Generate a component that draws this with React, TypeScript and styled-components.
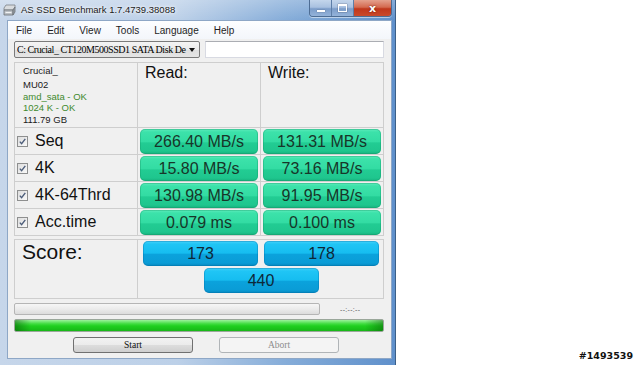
import React from "react"
import styled, { createGlobalStyle } from "styled-components"

const GlobalStyle = createGlobalStyle`
	html, body {
		margin: 0;
		padding: 0;
		background: #ffffff;
		font-family: "Liberation Sans", Arial, sans-serif;
	}
`

const menuItems = ["File", "Edit", "View", "Tools", "Language", "Help"]

const driveInfo = [
	{ text: "Crucial_", ok: false },
	{ text: "MU02", ok: false },
	{ text: "amd_sata - OK", ok: true },
	{ text: "1024 K - OK", ok: true },
	{ text: "111.79 GB", ok: false },
]

const results = [
	{ label: "Seq", read: "266.40 MB/s", write: "131.31 MB/s" },
	{ label: "4K", read: "15.80 MB/s", write: "73.16 MB/s" },
	{ label: "4K-64Thrd", read: "130.98 MB/s", write: "91.95 MB/s" },
	{ label: "Acc.time", read: "0.079 ms", write: "0.100 ms" },
]

const DriveIcon = () => (
	<svg width="13" height="12" viewBox="0 0 13 12">
		<path d="M3 1 L12 1 L12 3 L10 6 L1 6 L1 4 Z" fill="#d9dcdf" stroke="#7b8085" strokeWidth="0.8" />
		<path d="M1 6 L10 6 L10 11 L1 11 Z" fill="#b9bec3" stroke="#6d7277" strokeWidth="0.8" />
		<path d="M10 6 L12 3 L12 8 L10 11 Z" fill="#9aa0a6" stroke="#6d7277" strokeWidth="0.8" />
		<path d="M2.5 8.5 H8.5" stroke="#f2f3f4" strokeWidth="1" />
	</svg>
)

const CheckIcon = () => (
	<svg width="11" height="11" viewBox="0 0 11 11">
		<defs>
			<linearGradient id="cbfill" x1="0" y1="0" x2="1" y2="1">
				<stop offset="0" stopColor="#dcdcdc" />
				<stop offset="1" stopColor="#fbfbfb" />
			</linearGradient>
		</defs>
		<rect x="0.5" y="0.5" width="10" height="10" fill="url(#cbfill)" stroke="#8e8f8f" />
		<path d="M2.8 5.6 L4.6 7.6 L8.3 2.9" fill="none" stroke="#4c5d7a" strokeWidth="1.4" />
	</svg>
)

const App: React.FC = () => {
	return (
		<Page>
			<GlobalStyle />
			<Window>
				<TitleBar>
					<DriveIcon />
					<Title>AS SSD Benchmark 1.7.4739.38088</Title>
					<Caption>
						<CaptionButton>
							<MinGlyph />
						</CaptionButton>
						<CaptionButton>
							<MaxGlyph />
						</CaptionButton>
						<CloseButton>x</CloseButton>
					</Caption>
				</TitleBar>
				<Client>
					<MenuBar>
						{menuItems.map((m) => (
							<MenuItem key={m}>{m}</MenuItem>
						))}
					</MenuBar>
					<Content>
						<DriveRow>
							<Combo>
								<ComboText>C: Crucial_ CT120M500SSD1 SATA Disk De</ComboText>
								<Arrow />
							</Combo>
							<TextBox />
						</DriveRow>
						<Table>
							<InfoCell>
								{driveInfo.map((d, i) => (
									<InfoLine key={d.text} $ok={d.ok} $first={i === 0}>
										{d.text}
									</InfoLine>
								))}
							</InfoCell>
							<HeadCell>Read:</HeadCell>
							<HeadCell>Write:</HeadCell>
							{results.map((r) => (
								<React.Fragment key={r.label}>
									<LabelCell>
										<CheckIcon />
										<span>{r.label}</span>
									</LabelCell>
									<ValueCell>
										<ResultButton>{r.read}</ResultButton>
									</ValueCell>
									<ValueCell>
										<ResultButton>{r.write}</ResultButton>
									</ValueCell>
								</React.Fragment>
							))}
						</Table>
						<ScoreBox>
							<ScoreLabel>Score:</ScoreLabel>
							<ScoreGrid>
								<ScoreButton>173</ScoreButton>
								<ScoreButton>178</ScoreButton>
								<ScoreButton $total>440</ScoreButton>
							</ScoreGrid>
						</ScoreBox>
						<ProgressRow>
							<GrayBar />
							<Timer>--:--:--</Timer>
						</ProgressRow>
						<GreenBar />
						<ButtonRow>
							<PushButton>Start</PushButton>
							<PushButton $disabled>Abort</PushButton>
						</ButtonRow>
					</Content>
				</Client>
			</Window>
			<Aside>
				<Watermark>#1493539</Watermark>
			</Aside>
		</Page>
	)
}

export default App

const Page = styled.div`
	display: flex;
	width: 640px;
	height: 365px;
	overflow: hidden;
`

const Window = styled.div`
	display: flex;
	flex-direction: column;
	width: 395px;
	height: 365px;
	flex-shrink: 0;
	border-right: 1px solid #3b5f88;
	background: linear-gradient(180deg, rgba(255, 255, 255, 0.25) 0, rgba(255, 255, 255, 0) 20px),
		linear-gradient(90deg, #c6d6ea 0%, #bcd0e8 45%, #86add9 72%, #5f90cb 100%);
`

const TitleBar = styled.div`
	display: flex;
	align-items: flex-start;
	height: 20px;
	padding-left: 3px;
	svg {
		margin-top: 4px;
	}
`

const Title = styled.div`
	margin-left: 5px;
	margin-top: 4px;
	font-size: 9.5px;
	line-height: 12px;
	color: #1b1b1b;
	text-shadow: 0 0 5px #ffffff, 0 0 3px #ffffff;
	white-space: nowrap;
`

const Caption = styled.div`
	display: flex;
	margin-left: auto;
	margin-right: 3px;
	height: 16px;
	border: 1px solid #4d6d94;
	border-top: none;
	border-radius: 0 0 4px 4px;
	overflow: hidden;
	box-shadow: 0 1px 0 rgba(255, 255, 255, 0.5);
`

const CaptionButton = styled.div`
	display: flex;
	align-items: center;
	justify-content: center;
	width: 21px;
	background: linear-gradient(180deg, #c4d6ec 0%, #a9c1e0 45%, #7c9dc9 55%, #94b3da 100%);
	border-right: 1px solid #5d7ea8;
`

const MinGlyph = styled.div`
	width: 8px;
	height: 2px;
	margin-top: 6px;
	background: #ffffff;
	box-shadow: 0 0 1px #334;
`

const MaxGlyph = styled.div`
	width: 7px;
	height: 5px;
	border: 1px solid #ffffff;
	border-top-width: 2px;
	box-shadow: 0 0 1px #334;
`

const CloseButton = styled.div`
	display: flex;
	align-items: center;
	justify-content: center;
	width: 37px;
	font-family: "DejaVu Sans", sans-serif;
	font-weight: bold;
	font-size: 11px;
	color: #ffffff;
	text-shadow: 0 0 2px #5a1200;
	background: linear-gradient(180deg, #e4a18e 0%, #d46a50 45%, #c0371c 55%, #c94a2c 100%);
`

const Client = styled.div`
	flex: 1;
	display: flex;
	flex-direction: column;
	margin: 0 3px 6px 7px;
	border: 1px solid #8ea7c6;
	background: #f0f0f0;
`

const MenuBar = styled.div`
	display: flex;
	gap: 15px;
	height: 18px;
	align-items: center;
	padding-left: 8px;
	background: linear-gradient(180deg, #fdfeff 0%, #f3f6fb 100%);
	border-bottom: 1px solid #f0f0f0;
`

const MenuItem = styled.span`
	font-size: 10px;
	color: #1e1e1e;
`

const Content = styled.div`
	display: flex;
	flex-direction: column;
	padding: 1px 7px 0 6px;
`

const DriveRow = styled.div`
	display: flex;
	gap: 5px;
	height: 17px;
`

const Combo = styled.div`
	display: flex;
	align-items: center;
	width: 186px;
	box-sizing: border-box;
	border: 1px solid #7a7a7a;
	border-radius: 2px;
	padding: 0 4px 0 2px;
	background: linear-gradient(180deg, #f4f4f4 0%, #ebebeb 50%, #dedede 51%, #e5e5e5 100%);
`

const ComboText = styled.span`
	flex: 1;
	font-family: "Liberation Serif", "Times New Roman", serif;
	font-size: 10px;
	letter-spacing: -0.45px;
	color: #000000;
	white-space: nowrap;
	overflow: hidden;
`

const Arrow = styled.div`
	width: 0;
	height: 0;
	border-left: 3px solid transparent;
	border-right: 3px solid transparent;
	border-top: 4px solid #111;
`

const TextBox = styled.div`
	width: 179px;
	box-sizing: border-box;
	background: #ffffff;
	border: 1px solid #d8dae2;
	border-top-color: #abadb3;
`

const Table = styled.div`
	display: grid;
	grid-template-columns: 123px 123px 123px;
	grid-template-rows: 65px repeat(4, 27px);
	margin-top: 4px;
	width: 370px;
	box-sizing: border-box;
	border-left: 1px solid #cecece;
	border-top: 1px solid #cecece;
	& > div {
		box-sizing: border-box;
		border-right: 1px solid #cecece;
		border-bottom: 1px solid #cecece;
	}
`

const InfoCell = styled.div`
	display: flex;
	flex-direction: column;
	padding: 2px 0 0 8px;
`

const InfoLine = styled.div<{ $ok: boolean; $first: boolean }>`
	font-size: 9.5px;
	line-height: 11.5px;
	color: ${(p) => (p.$ok ? "#3f8a2e" : "#1a1a1a")};
	margin-bottom: ${(p) => (p.$first ? "2.5px" : "0")};
`

const HeadCell = styled.div`
	padding: 1px 0 0 7px;
	font-size: 16px;
	line-height: 18px;
	color: #111111;
`

const LabelCell = styled.div`
	display: flex;
	align-items: center;
	gap: 7px;
	padding-left: 2px;
	font-size: 16px;
	color: #111111;
`

const ValueCell = styled.div`
	display: flex;
	padding: 1px 2px 0 2px;
`

const ResultButton = styled.div`
	flex: 1;
	height: 25px;
	display: flex;
	align-items: center;
	justify-content: center;
	border-radius: 5px;
	font-size: 16px;
	color: #173629;
	background: linear-gradient(180deg, #5eecbc 0%, #3ce2aa 12%, #33dca3 50%, #22cc93 56%, #1fc68e 88%, #16b17d 100%);
	box-shadow: inset 0 0 0 1px rgba(20, 150, 100, 0.35);
`

const ScoreBox = styled.div`
	display: flex;
	margin-top: 3px;
	width: 370px;
	height: 60px;
	box-sizing: border-box;
	border: 1px solid #cecece;
`

const ScoreLabel = styled.div`
	width: 123px;
	box-sizing: border-box;
	border-right: 1px solid #cecece;
	padding: 0 0 0 7px;
	font-size: 21px;
	line-height: 24px;
	color: #111111;
`

const ScoreGrid = styled.div`
	display: grid;
	grid-template-columns: 115px 115px;
	column-gap: 6px;
	row-gap: 2px;
	padding: 1px 0 0 5px;
	align-content: start;
`

const ScoreButton = styled.div<{ $total?: boolean }>`
	grid-column: ${(p) => (p.$total ? "1 / span 2" : "auto")};
	justify-self: center;
	width: 115px;
	height: 25px;
	display: flex;
	align-items: center;
	justify-content: center;
	border-radius: 5px;
	font-size: 16px;
	color: #0e2838;
	background: linear-gradient(180deg, #48d3fa 0%, #20c5f5 12%, #16bdf0 48%, #0ba2dc 54%, #0a9cd6 88%, #0687bd 100%);
	box-shadow: inset 0 0 0 1px rgba(0, 110, 170, 0.35);
`

const ProgressRow = styled.div`
	display: flex;
	align-items: center;
	margin-top: 4px;
	height: 12px;
`

const GrayBar = styled.div`
	width: 306px;
	height: 12px;
	box-sizing: border-box;
	border: 1px solid #b5b5b5;
	border-radius: 2px;
	background: linear-gradient(180deg, #f6f6f6 0%, #ebebeb 50%, #dcdcdc 100%);
`

const Timer = styled.span`
	margin-left: 20px;
	font-size: 7px;
	letter-spacing: 0.3px;
	color: #555555;
`

const GreenBar = styled.div`
	margin-top: 4px;
	width: 370px;
	height: 13px;
	box-sizing: border-box;
	border: 1px solid #9aa79a;
	border-radius: 2px;
	background: linear-gradient(90deg, rgba(0, 70, 0, 0.45) 0, rgba(0, 70, 0, 0) 16px, rgba(0, 70, 0, 0) 350px, rgba(0, 70, 0, 0.4) 100%),
		linear-gradient(180deg, #9cf29c 0%, #3fdc3f 35%, #1fcf1f 55%, #17b717 100%);
`

const ButtonRow = styled.div`
	display: flex;
	gap: 26px;
	margin-top: 5px;
	padding-left: 59px;
`

const PushButton = styled.div<{ $disabled?: boolean }>`
	width: 120px;
	height: 16px;
	box-sizing: border-box;
	display: flex;
	align-items: center;
	justify-content: center;
	border: 1px solid ${(p) => (p.$disabled ? "#b0b4b7" : "#707070")};
	border-radius: 3px;
	background: ${(p) =>
		p.$disabled ? "#f4f4f4" : "linear-gradient(180deg, #f2f2f2 0%, #ebebeb 50%, #dddddd 51%, #cfcfcf 100%)"};
	font-family: "Liberation Serif", "Times New Roman", serif;
	font-size: 9.5px;
	color: ${(p) => (p.$disabled ? "#8d8d8d" : "#111111")};
`

const Aside = styled.div`
	flex: 1;
	display: flex;
	align-items: flex-end;
	justify-content: flex-end;
	padding: 0 7px 4px 0;
`

const Watermark = styled.span`
	font-family: "DejaVu Sans", Verdana, sans-serif;
	font-weight: bold;
	font-size: 9.5px;
	color: #111111;
	text-shadow: 1px 0 0 #fff, -1px 0 0 #fff, 0 1px 0 #fff, 0 -1px 0 #fff;
`
